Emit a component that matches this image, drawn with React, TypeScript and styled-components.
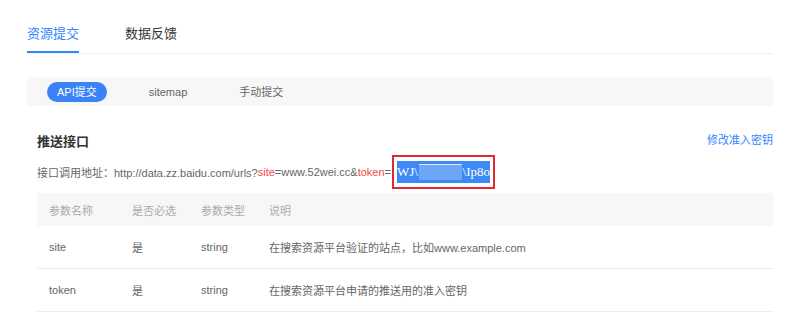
import React from "react";
import styled, { createGlobalStyle } from "styled-components";

const Global = createGlobalStyle`
  html, body { margin: 0; padding: 0; background: #fff; }
  body { font-family: "Liberation Sans", "Noto Sans CJK SC", sans-serif; }
`;

const Page = styled.div`
  width: 800px;
  height: 330px;
  box-sizing: border-box;
  padding: 0 27px;
  overflow: hidden;
`;

const Tabs = styled.div`
  display: flex;
  gap: 46px;
  border-bottom: 1px solid #f0f0f0;
`;

const Tab = styled.div<{ $active?: boolean }>`
  padding: 26px 0 9px;
  font-size: 13px;
  line-height: 16px;
  color: ${(p) => (p.$active ? "#3385ff" : "#333")};
  border-bottom: 2px solid ${(p) => (p.$active ? "#3385ff" : "transparent")};
`;

const SubBar = styled.div`
  margin-top: 23px;
  height: 29px;
  background: #f7f7f7;
  display: flex;
  align-items: center;
  gap: 32px;
  padding-left: 20px;
`;

const SubItem = styled.div<{ $active?: boolean }>`
  height: 20px;
  line-height: 20px;
  padding: 0 10px;
  border-radius: 10px;
  font-size: 11px;
  color: ${(p) => (p.$active ? "#fff" : "#666")};
  background: ${(p) => (p.$active ? "#3b82f6" : "transparent")};
`;

const Section = styled.div`
  padding-left: 10px;
`;

const HeadRow = styled.div`
  margin-top: 24px;
  display: flex;
  justify-content: space-between;
  align-items: center;
  height: 20px;
`;

const Heading = styled.div`
  font-size: 13px;
  font-weight: bold;
  color: #333;
`;

const Link = styled.a`
  font-size: 11px;
  color: #3385ff;
  text-decoration: none;
  margin-top: -2px;
`;

const UrlRow = styled.div`
  margin-top: 5px;
  display: flex;
  align-items: center;
  height: 34px;
  font-size: 11px;
  color: #666;
  white-space: nowrap;
`;

const Red = styled.span`
  color: #f04b4b;
`;

const TokenBox = styled.div`
  border: 2px solid #e0262e;
  padding: 4px 3px;
  display: flex;
  margin-left: 1px;
`;

const Highlight = styled.div`
  height: 22px;
  width: 93px;
  background: #3d89f5;
  display: flex;
  align-items: center;
  color: #fff;
  font-family: "Liberation Serif", serif;
  font-size: 13px;
  overflow: hidden;
`;

const Blur = styled.span`
  display: inline-block;
  width: 50px;
  height: 16px;
  background: #6ea6f7;
  border-top: 1px solid #dfe9fb;
  box-sizing: border-box;
  margin: 0 1px;
`;

const Table = styled.div`
  margin-top: 4px;
`;

const Row = styled.div<{ $head?: boolean }>`
  display: grid;
  grid-template-columns: 83px 69px 68px 1fr;
  padding-left: 12px;
  align-items: center;
  height: ${(p) => (p.$head ? "33px" : "42px")};
  background: ${(p) => (p.$head ? "#f7f7f7" : "#fff")};
  border-bottom: ${(p) => (p.$head ? "none" : "1px solid #eee")};
  font-size: 11px;
  color: ${(p) => (p.$head ? "#aaa" : "#666")};
`;

const rows = [
  ["site", "是", "string", "在搜索资源平台验证的站点，比如www.example.com"],
  ["token", "是", "string", "在搜索资源平台申请的推送用的准入密钥"],
];

export default function App() {
  return (
    <Page>
      <Global />
      <Tabs>
        <Tab $active>资源提交</Tab>
        <Tab>数据反馈</Tab>
      </Tabs>
      <SubBar>
        <SubItem $active>API提交</SubItem>
        <SubItem>sitemap</SubItem>
        <SubItem>手动提交</SubItem>
      </SubBar>
      <Section>
        <HeadRow>
          <Heading>推送接口</Heading>
          <Link href="#">修改准入密钥</Link>
        </HeadRow>
        <UrlRow>
          接口调用地址：http://data.zz.baidu.com/urls?<Red>site</Red>=www.52wei.cc&amp;
          <Red>token</Red>=
          <TokenBox>
            <Highlight>
              WJ\<Blur />\Ip8o
            </Highlight>
          </TokenBox>
        </UrlRow>
        <Table>
          <Row $head>
            <span>参数名称</span>
            <span>是否必选</span>
            <span>参数类型</span>
            <span>说明</span>
          </Row>
          {rows.map((r) => (
            <Row key={r[0]}>
              {r.map((c, i) => (
                <span key={i}>{c}</span>
              ))}
            </Row>
          ))}
        </Table>
      </Section>
    </Page>
  );
}
